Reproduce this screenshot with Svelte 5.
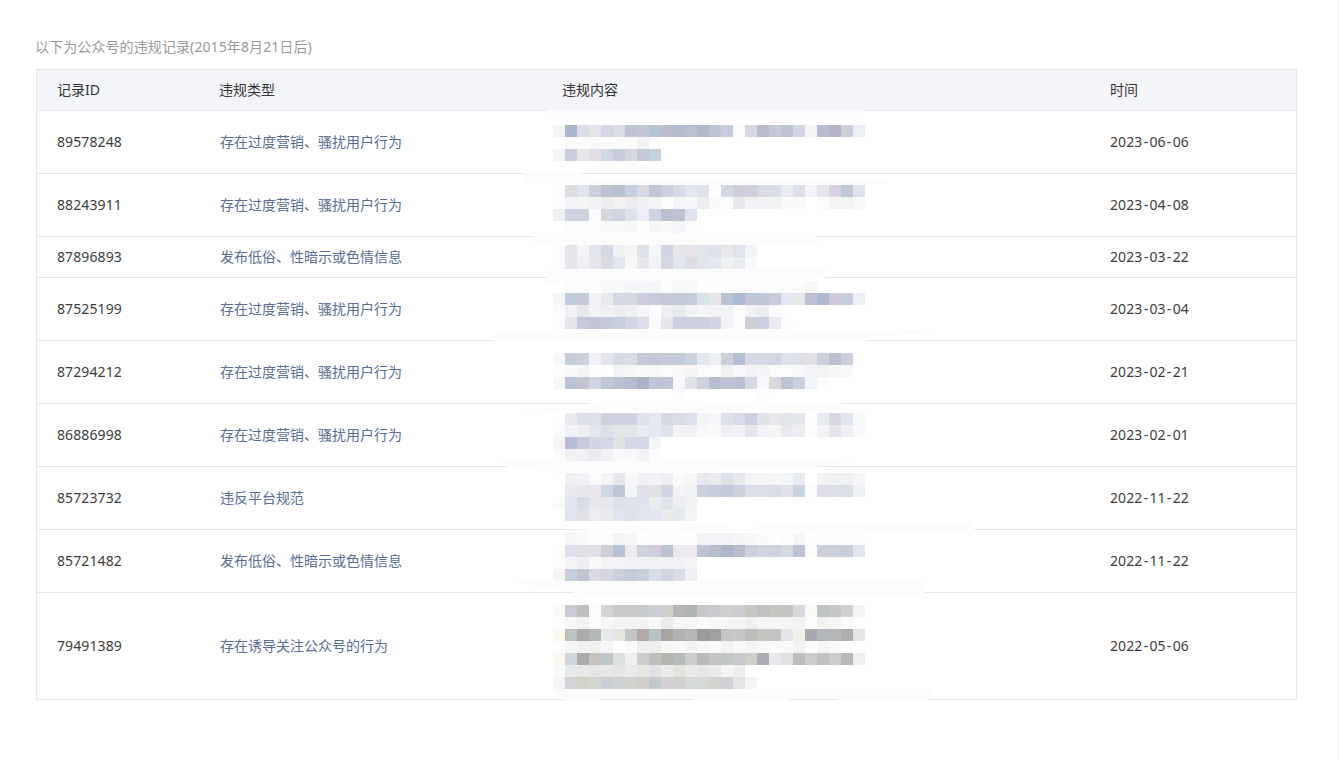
<script>
  const records = [
    { id: '89578248', type: '存在过度营销、骚扰用户行为', time: '2023-06-06', lines: 2 },
    { id: '88243911', type: '存在过度营销、骚扰用户行为', time: '2023-04-08', lines: 2 },
    { id: '87896893', type: '发布低俗、性暗示或色情信息', time: '2023-03-22', lines: 1 },
    { id: '87525199', type: '存在过度营销、骚扰用户行为', time: '2023-03-04', lines: 2 },
    { id: '87294212', type: '存在过度营销、骚扰用户行为', time: '2023-02-21', lines: 2 },
    { id: '86886998', type: '存在过度营销、骚扰用户行为', time: '2023-02-01', lines: 2 },
    { id: '85723732', type: '违反平台规范', time: '2022-11-22', lines: 2 },
    { id: '85721482', type: '发布低俗、性暗示或色情信息', time: '2022-11-22', lines: 2 },
    { id: '79491389', type: '存在诱导关注公众号的行为', time: '2022-05-06', lines: 4 }
  ];

  // Smudges left where the original content was painted over.
  const smears = [
    '547,110 863,110 863,113 547,113',
    '523,173 581,173 590,179 887,179 887,184 523,184',
    '533,233 813,233 822,245 533,245',
    '547,270 827,270 825,278 546,285',
    '500,330 937,330 863,341 493,341 493,338',
    '610,401 840,403 870,412 515,412',
    '500,461 863,461 813,467 573,475 507,467',
    '573,530 715,522 735,529 750,529 775,522 973,522 973,532 573,532',
    '513,582 927,582 925,594 585,594 555,590',
    '550,689 935,689 927,701 838,701 838,699 790,699 790,701 693,701 693,699 600,699 600,701 565,701'
  ];

  // Censoring mosaic: one row per 12px band, 26 cells of 12px from x=553.
  const bands = [
    [125, 'f4f3f5 a9b6cb d9dde8 e3e3e8 d4d6e2 d9dce7 bfc5d5 c4c6d3 b9c1d5 bcbdcc b5bbd0 b8bfcf aeb9ce bfc5d4 c7ccdc fbfbfb d4d7e0 b9bccd c5c9d6 bec3d4 d2d6e4 f5f5f5 b9bed2 b5b4c8 c7d0db ecf0f4'],
    [137, '- fbfbfb fbfbfb f8f8f8 fafafa fcfcfd fcfcfc f2f2f4 fcfcfd'],
    [149, 'f6f5f7 cacedb e5e5ea dedde2 d1d6e3 c8cbdb d5d8e0 c6c8d6 c7d0dd'],
    [185, 'fbfbfb dcdce0 e0e4ed cdd0da bfc2d5 b9c0d0 c5cedb dad8e2 c1c6d6 cdd1df d8dbe5 e4e6ef e0e3ec - d6d9e3 cdcede d2cfdb d8dce5 dadce7 ebecf0 dde0ea f3f4f8 e6e7ec d5d4e0 c0c7d7 e3e3ee'],
    [197, 'fcfcfc f3f4f7 f4f5f7 f1f2f5 ecedf2 f2f2f3 e9ebef f0f0f4 f3f4f7 fcfdfc f4f5f8 f6f6f7 ecedf3 fafafa fbfbfb e8e9ef f1f2f6 f1f1f3 f2f2f5 fafafb fafafa - fbfbfb f4f4f5 f2f3f5 f7f8fa'],
    [209, 'f0eff4 cfd2df cfd2df fbfbfc d7d6dc cfd3df dfe2eb eeedf1 ccd4df bbbed0 bec2d2 dfe3ec'],
    [221, '- f9fbfd fafbfc fbfcfd f8f8f9 f9f9fb f6f7f9 fefefe f5f6f9 f9f9fa f4f5f8 fcfdfb'],
    [245, 'fbfbfb e5e6ec f4f4f6 e4e5ea d5d8e3 eff0f4 f4f4f5 dbe0e9 f6f6f7 d3d5e3 e6e6eb e7e4ea dfe3ec dde2ea e9e9ed e0e3eb f2f3f6'],
    [257, 'fbfbfb e6e7ec f0eff3 e6e6eb d8dbe4 e3e6f0 f7f7f8 e7e7ed f2f1f4 d5d7e2 e2e6ee dfdee3 e1e6ee e4e8f1 eff0f2 e8ebef f9fafb'],
    [281, '- fbfbfb fbfbfb fdfdfd f7f8fa f7f8fa f5f6f9 f5f6f9 f4f5f8 fdfdfd f7f8f9 f8f8fa - - fcfcfc fbfbfb fbfbfb fbfbfb fdfdfd fafbfd fbfbfb f7f7fa'],
    [293, 'f6f6f6 c2cbdc c4cadb f1f1f6 e9e9ef d3d8e4 d6d9e3 ccced9 c4cbdb c6c8d4 c5cad9 c6cbda dbe2ea e6e6ea bfc2d2 acb9cf c3c4d7 c0c7da c7cbdb e4e8f1 e9e8ec bdc0d2 b0b9d0 cdc9d6 c6ccdc eff0f5'],
    [305, 'fbfbfb f0f1f5 e8e8ed f2f3f8 f0f1f5 eeeef2 f0f1f5 f6f6f8 - eeeff3 e9eaee f1f2f6 f5f5f7 f4f4f8 f3f4f8 fdfdfd f2f2f6 ecedf0 fbfcfe'],
    [317, 'fbfbfb e5e6ec c6c9dc c1c7d9 c6cad9 c9cedb d2d5e2 dcdfe9 fbfbfb e6e7ea cdd0de ccd0dd ced0dd d2d6e3 f2f3f7 fbfcfd cfcdd6 ccd0de ebecf1 fcfdfe'],
    [353, 'f8f8f8 c5cfdc cfd0dd f1f2f6 e4e5e9 d8dbe5 d8dce4 c7c9d6 c1c8d9 c8c9d6 c3cadb cbd2de e3e7f0 eeeff2 ced0d9 b4bfd3 d7dae4 d7dae4 d2d6e3 dfe2e9 dde0e8 e0e1e9 cdd1dc bac0d1 c9cfdd'],
    [365, 'fcfcfc f8f9fb f4f4f6 fcfdfe fefefe f3f4f8 f6f7f9 fafafb f7f8fa fbfbfc f8f9fb f5f5f6 f9fafb fbfbfb f0f1f3 f7f8fa f2f3f6 f4f5f7 f9fafb fbfbfc f9f9fb f5f5f9 f3f3f5 f5f6f8 f7f8fa'],
    [377, 'f9f5f4 b9c2d7 c6c4d0 cfd6e3 c2c6d2 bac1d5 b7bcd2 acb3c4 bdc5d6 c2c6d2 f8f9fd e1e2e5 d0d3dd b8bed1 bfc2d3 bcc0d6 d6d9e3 f9f9fb d9d9dc bcc3d5 c9d0df f3f4f8 fcfcfc'],
    [389, '- - - - - - - - - - fcfcfc - - - - - - fcfcfc'],
    [413, 'fefefe e9e9ee dcdfe8 dde0e8 ced2de cfd2e0 d1d3e0 dfe3e9 e5e8ef d6d9e4 d9dbe6 dde0e9 f3f4f8 f6f7f9 dde1eb d9dce8 cfd1df e0e2e7 e8e8ea e2e4e8 e3e7f0 - e7eaf0 dad9e0 e0e4ed f8f9fa'],
    [425, 'fbfbfb f1f2f6 edeef1 e4e5ee dde1ea e4e5e9 e5e6e9 e8ebf2 e4e8f0 dfe3ed f5f3f6 f2f2f5 f7f8fa fafafb eff0f5 f2f3f6 e4e5ee f2f3f7 f5f5f8 e9eaee ecedf1 fcfcfc f3f4f7 e7e5ea eef0f4 f9f9fb'],
    [437, 'f4f4f4 b7bdd4 c9cbdc d2d5e2 d5d7e4 e1e2e6 d5d8e4 d4d8e4 f5f5f6'],
    [449, 'fbfbfb f2f2f5 f0f1f5 ebecf2 f1f2f6 f9f9fb f9f9fb f3f4f8 fcfcfc'],
    [473, '- f0f1f5 f1f2f6 fafafb f4f4f6 e7e8ee f7f8f9 f1f2f5 f2f3f5 eeeff2 fafafb f7f7f8 e6e8ec e9ebee dde1e9 e8e9ee f3f4f7 f4f4f6 f6f6f8 f3f4f5 e8ebf2 - f2f3f5 f0f1f2 f0f1f3 f6f6f9'],
    [485, '- eaebf0 e9e8ec e8e8ec d0d5df bfc7d7 f5f6f7 dee1ea e2e2e5 d3d5e1 f3f4f6 f1f2f3 cbd0dc c7ccd9 c0c8d9 ced1db dbdfe9 dcdfe9 d8dbe6 e1e2e6 ccd2df fbfbfb dcdde6 dedfe5 d9dee7 eff0f4'],
    [497, 'fbfafa e1e6ef dadde7 e7e8ec e7e7ec dde2ea dee3ea dde2eb ecedf1 e2e4ed ecedf1 f2f2f5'],
    [509, '- e0e5ee e0e0e8 ebecef ebebee e0e4ec dde1e9 dfe4ed e3e6ee ebebed e5e8ef f3f4f7'],
    [533, '- f6f7f9 f9fafb fefefe fbfaf9 f3f4f8 f7f7f9 fefefe fbfcfd fcfcfc fefefe fefefe f3f4f7 f3f4f7 f1f3f6 f4f5f6 f6f7f8 f9fafb fefefe fcfcfb f6f7f8 fefefe fbfafa fcfbfb fdfdfc fdfdfd'],
    [545, 'fcfcfc e0e1ea e0e0e5 e0e0e7 cecfda b6c1d3 edebee ccd2de d0cfda bbc3d2 e8e9f0 ece8eb bcc3d4 b8bccd aeb7ca b9bdcd ccd0dc d2d4df ced2de d6d9df bcc3d6 fbfbfb ccced9 cdcfd9 c8cfdc e3e6ef'],
    [557, 'fdfcfb f4f5f9 eeeef2 f8f8f9 f3f3f5 f2f3f6 f1f2f5 f1f2f5 f0f1f5 f0f1f5 f0f1f5 f3f3f7'],
    [569, 'f9f4f2 c4d0de c3c4d1 d8dbe5 d7d5de cbd0dc c4ccdb c7d0dd d8dde5 d1d3e0 d9dce5 eeeff4'],
    [605, 'fbf8f5 c9cbd0 bfbfc0 fafbfd d4d5d2 c9c9c9 c9c9c9 c5cccb cccdd2 cdcfca b5b4b7 aeb4b2 c9c7c8 c9cacd cfcdce ccccce c6c6c2 c0c0c2 c6c6c0 c4c4c2 d8d9dc fbf8f5 bfc3c3 c8c6c6 d1cfd0 f3f4f6'],
    [617, 'fdfdfd f6f7f7 f3f4f4 fbfcfc f7f7f8 f3f3f3 f3f3f3 f4f4f4 f8f8fa ececec f7f7f8 f6f6f5 fcfcfc f6f7f7 f5f6f6 f5f5f6 f0f0ef f5f6f6 f5f6f6 f4f5f5 f3f3f3 fdfdfe f2f2f0 f5f5f5 fcfcfc fefefe'],
    [629, 'fbf8f1 bbc1bf aeaaa9 b4b8b7 e8e9ea e9e7e1 c2c5c7 b0a9a8 bac4c6 a7a5a3 b1b1b1 b8b7b3 9b9b9b 9fa1a1 c5c5c5 c8c8ca bbbdbd c6c5c1 c3c3c3 e4e5e7 f0efea a9a8aa b1b7ba b8b5b7 aeaeac e5e6e9'],
    [641, 'fefefe f6f7f7 f1f1ef f1f1ef f5f6f8 - fbfbfb eeeeee eeeeee f9f8f6 f8f9f9 f3f3f3 f8f8f8 fafafa f1f2f2 f9f9f6 f5f5f5 f8f8f8 fbfbfb f9f9f6 f1f3f3 fdfdfd f5f5f5 f9f9f9 fcfcfc'],
    [653, 'fbf7f1 ced8df aeaaaa c3c3bd c0c6c8 dcdfdd f1f0ee cdcdcd bfbfbf b6b6b0 b7bbb9 cdcdcd b8bbb6 c7c4c6 c4c7c7 c9c9cc d0cdca adaeb3 e6e8eb e1e0dc bdbdc0 cccccc c2c2c2 cdcbcb b9b8b5 eff0f2'],
    [665, 'fbf9f6 e7eaeb e9e8e6 e5e7e6 e6e7e6 e4e4e4 e9ebeb e6e6e3 e1e2e5 ebebeb e4e2df e9eaea e6e8e6 eaeaea f5f5f5 eeeeee'],
    [677, 'f4f4f4 d3d5d8 d5d2ca d4d6d1 cad0d2 ced0d2 d2d3d0 d0cfca c3c8cb d2d0d5 cfd1ce d6d9d6 d4d9d6 d5d4d1 d2d0d6 e2e3e5 f4f4f4']
  ];

  const cells = bands.flatMap(([y, row]) =>
    row.split(' ').map((c, i) => ({ x: 553 + i * 12, y, c })).filter((cell) => cell.c !== '-')
  );
</script>

<div class="page">
  <main class="main">
    <p class="caption">以下为公众号的违规记录(2015年8月21日后)</p>
    <div class="table-wrap">
      <table>
        <colgroup>
          <col class="c-id" />
          <col class="c-type" />
          <col class="c-content" />
          <col />
        </colgroup>
        <thead>
          <tr>
            <th>记录ID</th>
            <th>违规类型</th>
            <th>违规内容</th>
            <th>时间</th>
          </tr>
        </thead>
        <tbody>
          {#each records as r}
            {@const parts = r.time.split('-')}
            <tr>
              <td class="num">{r.id}</td>
              <td class="type">{r.type}</td>
              <td><div style="height:{r.lines * 22}px"></div></td>
              <td class="num">{parts[0]}<span class="hy">-</span>{parts[1]}<span class="hy">-</span>{parts[2]}</td>
            </tr>
          {/each}
        </tbody>
      </table>

      <svg class="mosaic" viewBox="36 69 1261 631" aria-hidden="true">
        {#each smears as points}
          <polygon {points} fill="#fcfcfd" />
        {/each}
        <g shape-rendering="crispEdges">
          {#each cells as cell}
            <rect x={cell.x} y={cell.y} width="12" height="12" fill="#{cell.c}" />
          {/each}
        </g>
      </svg>
    </div>
  </main>
  <div class="track"></div>
</div>

<style>
  :global(body) {
    margin: 0;
    background: #fff;
  }

  .page {
    display: flex;
    min-height: 760px;
    font-family: "Noto Sans", "Noto Sans CJK SC", sans-serif;
    font-size: 14px;
    line-height: 22px;
    color: #353535;
  }

  .main {
    flex: 1;
    min-width: 0;
    padding: 36px 40px 0 36px;
  }

  .track {
    width: 2px;
    background: #f6f6f6;
  }

  .caption {
    margin: 0 0 11px -1px;
    color: #9a9a9a;
    letter-spacing: 0.1px;
  }

  .table-wrap {
    position: relative;
    border: 1px solid #e4e8eb;
    border-bottom: 0;
  }

  table {
    width: 100%;
    table-layout: fixed;
    border-collapse: separate;
    border-spacing: 0;
  }

  .c-id { width: 162px; }
  .c-type { width: 343px; }
  .c-content { width: 548px; }

  th, td {
    padding: 9px 20px;
    border-bottom: 1px solid #e4e8eb;
    text-align: left;
    font-weight: 400;
  }

  th {
    background: #f4f5f9;
  }

  .num {
    color: #3c3c3c;
    letter-spacing: 0.1px;
  }

  .hy {
    padding: 0 1.2px;
  }

  .type {
    padding-left: 21px;
    color: #5b6c95;
  }

  .mosaic {
    position: absolute;
    top: -1px;
    left: -1px;
    width: 1261px;
    height: 631px;
    overflow: visible;
    pointer-events: none;
  }
</style>
